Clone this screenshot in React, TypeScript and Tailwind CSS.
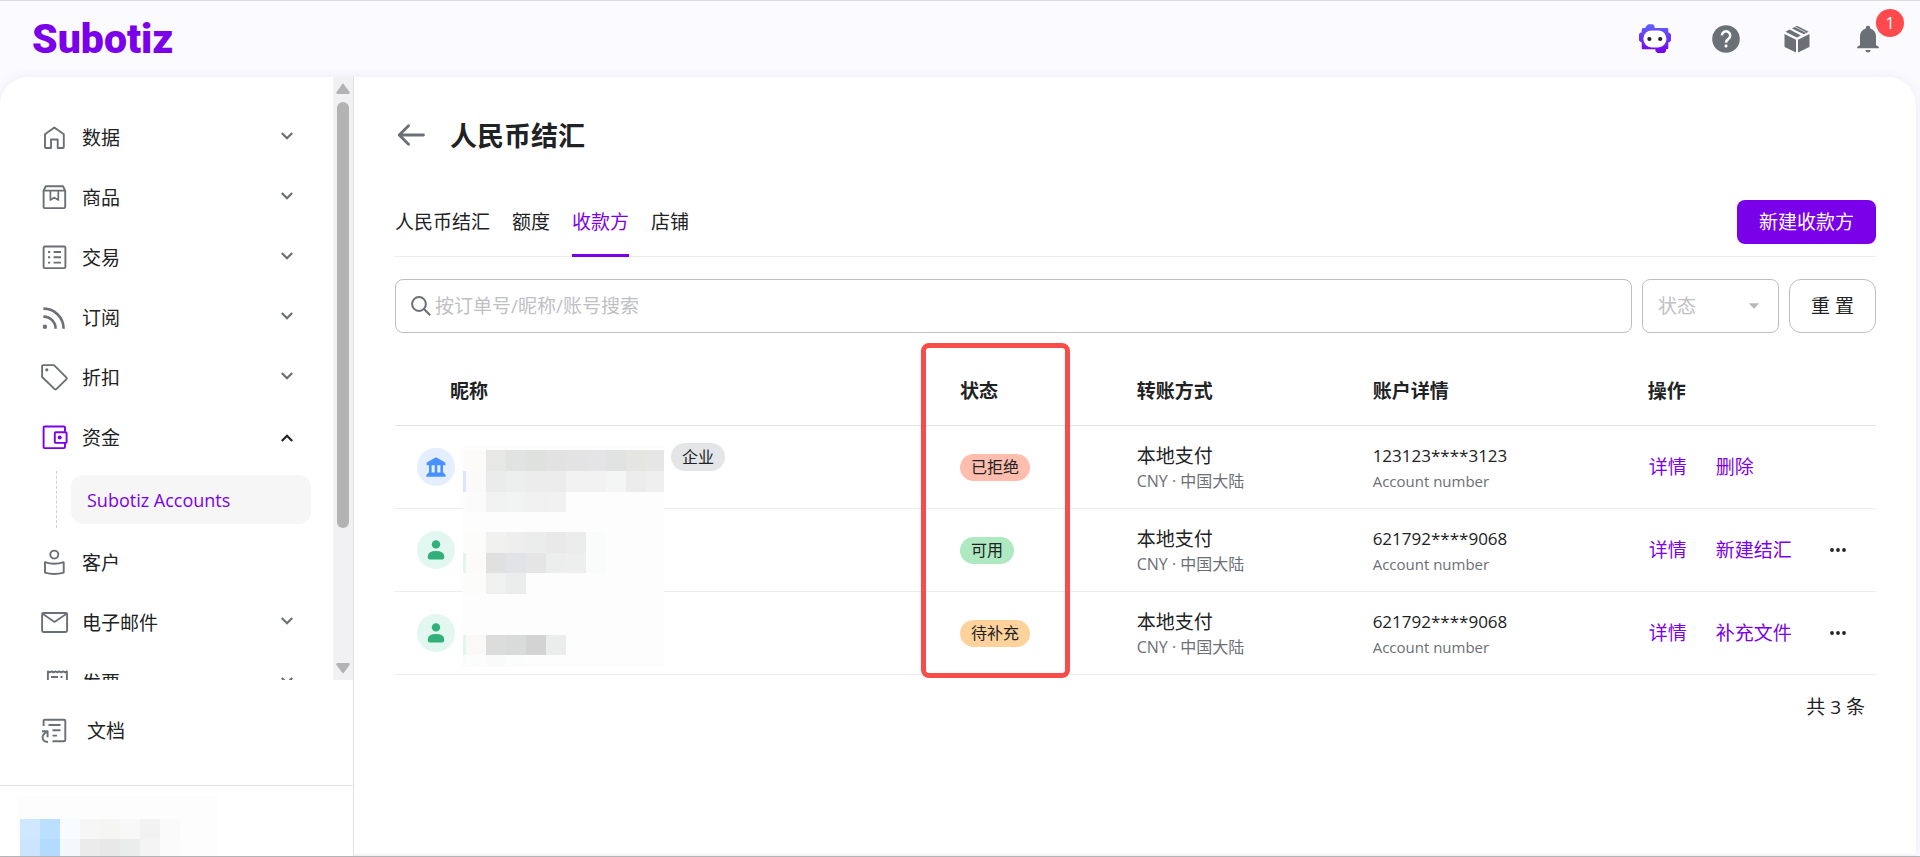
import React from "react";
import type { ReactNode } from "react";

type NavItem = {
  label: string;
  icon: ReactNode;
  chevron?: "down" | "up";
  children?: string[];
};

type Payee = {
  kind: "company" | "person";
  tag?: string;
  status: string;
  statusClass: string;
  method: string;
  region: string;
  account: string;
  action: string;
  more: boolean;
};

function NavIcon({ children, className = "text-[#6b6f76]" }: { children: ReactNode; className?: string }) {
  return (
    <svg
      viewBox="0 0 26 26"
      className={`size-[26px] shrink-0 overflow-visible ${className}`}
      fill="none"
      stroke="currentColor"
      strokeWidth="1.9"
      strokeLinejoin="round"
      aria-hidden="true"
    >
      {children}
    </svg>
  );
}

const navItems: NavItem[] = [
  {
    label: "数据",
    chevron: "down",
    icon: (
      <NavIcon>
        <path d="M4 9.2 13.3 2.4 22.8 9.2V22q0 1-1 1H16.7V14.5H10V23H5q-1 0-1-1Z" />
      </NavIcon>
    ),
  },
  {
    label: "商品",
    chevron: "down",
    icon: (
      <NavIcon>
        <path d="M2.6 5.6 4.8 1.3H22L24.2 5.6V22q0 1.1-1.1 1.1H3.7Q2.6 23.1 2.6 22ZM2.6 5.6H24.2" />
        <path d="M9.4 6V15L13.4 12.6 17.3 15V6" strokeWidth="1.7" />
      </NavIcon>
    ),
  },
  {
    label: "交易",
    chevron: "down",
    icon: (
      <NavIcon>
        <rect x="2.6" y="1.5" width="21.8" height="21.6" rx="1.2" />
        <path d="M12.6 7h7.4M12.6 12.3h7.4M12.6 17.6h7.4M7 7h2.2M7 12.3h2.2M7 17.6h2.2" />
      </NavIcon>
    ),
  },
  {
    label: "订阅",
    chevron: "down",
    icon: (
      <NavIcon>
        <circle cx="3.9" cy="21.8" r="2.2" fill="currentColor" stroke="none" />
        <path d="M2.4 3.6A20 20 0 0 1 22.6 23.8M2.4 11.6A12 12 0 0 1 14.6 23.8" strokeWidth="2.6" />
      </NavIcon>
    ),
  },
  {
    label: "折扣",
    chevron: "down",
    icon: (
      <NavIcon>
        <path d="M1.1 1.1Q1.1.1 2.1.1H13L25.5 12.6q.8.8 0 1.6L15.3 24.1q-.8.8-1.6 0L1.1 12Z" />
        <circle cx="5.8" cy="4.8" r="1" fill="currentColor" strokeWidth="1.2" />
      </NavIcon>
    ),
  },
  {
    label: "资金",
    chevron: "up",
    children: ["Subotiz Accounts"],
    icon: (
      <NavIcon className="text-[#7b00ea]">
        <path d="M24 6.8V2.6q0-1.1-1.1-1.1H3.7q-1.1 0-1.1 1.1V22q0 1.1 1.1 1.1h19.2q1.1 0 1.1-1.1V18" />
        <rect x="13.8" y="7.3" width="11.8" height="10.6" rx="1" />
        <circle cx="18.7" cy="12.5" r="2" fill="currentColor" stroke="none" />
      </NavIcon>
    ),
  },
  {
    label: "客户",
    icon: (
      <NavIcon>
        <circle cx="13.3" cy="4.6" r="4" />
        <path d="M4 12.2Q13.3 15.4 22.7 12.2V22.6Q13.3 25.4 4 22.6Z" />
      </NavIcon>
    ),
  },
  {
    label: "电子邮件",
    chevron: "down",
    icon: (
      <NavIcon>
        <rect x="1.1" y="3" width="25" height="19" rx="1.2" />
        <path d="M1.6 3.8 13.5 12 25.6 3.8" strokeWidth="1.7" />
      </NavIcon>
    ),
  },
  {
    label: "发票",
    chevron: "down",
    icon: (
      <NavIcon>
        <path d="M6.9 25V1.4l1.9 1 1.9-1 1.9 1 1.9-1 1.9 1 1.9-1 1.9 1 1.9-1 1.9 1 1.9-1V25Z" />
        <path d="M10 7h7M19.5 7h2M10 12h7" />
      </NavIcon>
    ),
  },
];

const payees: Payee[] = [
  {
    kind: "company",
    tag: "企业",
    status: "已拒绝",
    statusClass: "bg-[#ffbdae]",
    method: "本地支付",
    region: "CNY · 中国大陆",
    account: "123123****3123",
    action: "删除",
    more: false,
  },
  {
    kind: "person",
    status: "可用",
    statusClass: "bg-[#aee9c1]",
    method: "本地支付",
    region: "CNY · 中国大陆",
    account: "621792****9068",
    action: "新建结汇",
    more: true,
  },
  {
    kind: "person",
    status: "待补充",
    statusClass: "bg-[#ffd29c]",
    method: "本地支付",
    region: "CNY · 中国大陆",
    account: "621792****9068",
    action: "补充文件",
    more: true,
  },
];

// first entry is the strip height, the rest are the block colours from left to right
const nameMask: [number, ...string[]][] = [
  [5],
  [21, "#fbfbfb", "#fcfbfa", "#e7e7e5", "#e1e3e2", "#dfe1df", "#e1e2e1", "#e3e3e3", "#e4e4e7", "#e1e3e3", "#e5e5e2", "#e5e6e5"],
  [21, "#dbe5fd", "#fafafa", "#ebebeb", "#edefee", "#ececec", "#ececec", "#f2f2f2", "#f2f2f2", "#f4f6f5", "#ececec", "#efefef"],
  [20, "#fcfcfc", "#fbfbfb", "#f2f2f2", "#f2f4f3", "#f0f0f0", "#f1f1f1"],
  [20],
  [21, "#fafdfc", "#fcfcfa", "#f1f1ef", "#eeeeee", "#ebeded", "#e9e9e9", "#ececec", "#fafcfb"],
  [20, "#e2f6ee", "#fcfbf9", "#e0e0e0", "#e2e3e7", "#e5e5e5", "#eceeed", "#eeeeee", "#fafcfb"],
  [21, "#fafdfc", "#fcfcfa", "#f0f0f0", "#ebeded"],
  [41],
  [20, "#e2f6ee", "#fbf9f7", "#dcdcdc", "#d9dada", "#d3d3d3", "#ebedec"],
  [12, "#f5fcf9", "#fcfcfc", "#fafafa", "#fbfcfc"],
];

const accountMask: [number, ...string[]][] = [
  [23],
  [20, "#fdfdfd", "#d0e8ff", "#bbdfff", "#f7fcff", "#f6f6f6", "#f5f5f4", "#f8f8f8", "#f2f2f2", "#fafafa"],
  [18, "#fdfdfd", "#cbe4ff", "#b3daff", "#f3f8fd", "#ebebeb", "#e8e8e8", "#ebecec", "#f4f4f4", "#fafbfa"],
];

function Mask({ rows }: { rows: [number, ...string[]][] }) {
  return (
    <div className="w-[201px] bg-[#fdfdfd]" aria-hidden="true">
      {rows.map(([height, ...colors], i) => (
        <div key={i} className="flex overflow-hidden" style={{ height }}>
          {colors.map((color, j) => (
            <div key={j} className={j === 0 ? "w-[3px] shrink-0" : "w-5 shrink-0"} style={{ backgroundColor: color }} />
          ))}
        </div>
      ))}
    </div>
  );
}

function Chevron({ dir }: { dir: "down" | "up" }) {
  return (
    <svg viewBox="0 0 12 8" className={`w-3 h-2 ${dir === "up" ? "text-[#222]" : "text-[#6b6f76] mb-1"}`} fill="none" stroke="currentColor" strokeWidth="2.2" aria-hidden="true">
      {dir === "up" ? <path d="M.8 7 6 1.8 11.2 7" /> : <path d="M.8 1 6 6.2 11.2 1" />}
    </svg>
  );
}

function Header() {
  return (
    <header className="h-[77px] shrink-0 flex items-center justify-between border-t border-[#dedee0] pl-8 pr-9">
      <a href="#" className="font-[Roboto,sans-serif] text-[41px] leading-10 font-black text-[#7b00ea]">
        Subotiz
      </a>
      <div className="flex items-center gap-[39px]">
        <button type="button" aria-label="AI" className="size-8">
          <svg viewBox="0 0 32 30" className="w-8 h-[30px]">
            <defs>
              <linearGradient id="bot" x1="0" y1="0" x2="0" y2="1">
                <stop offset="0" stopColor="#5f63ff" />
                <stop offset="1" stopColor="#7800ec" />
              </linearGradient>
            </defs>
            <path
              fill="url(#bot)"
              d="M6.3 4Q6.3 2.8 8.2 1.2L9.4.2H14l1.6 2v1.9H28q1.3 0 1.3 1.3v3.2H30l2 1.6v6.4l-1.6 1.6h-1.1V24q0 1.3-1.3 1.3h-1v2L25.3 29H18.4l-2-2v-1.7H4q-1.3 0-1.3-1.3v-5.8H2L0 16.5V10l1.6-1.5h1.1V6q0-1.9 1.5-1.9Z"
            />
            <rect x="4.4" y="6.4" width="23" height="17" rx="8.2" fill="#fff" />
            <circle cx="10.4" cy="15" r="2.1" fill="#222" />
            <circle cx="21.2" cy="15" r="2.1" fill="#222" />
          </svg>
        </button>
        <button type="button" aria-label="帮助" className="size-8 grid place-items-center">
          <svg viewBox="0 0 28 28" className="size-7">
            <circle cx="14" cy="14" r="13.8" fill="#6b6f76" />
            <path d="M9.8 10.4a4.2 4.2 0 1 1 6.4 3.7q-2.2 1.4-2.2 3.6" fill="none" stroke="#fff" strokeWidth="2.5" />
            <rect x="12.6" y="19.6" width="2.8" height="2.8" rx=".8" fill="#fff" />
          </svg>
        </button>
        <button type="button" aria-label="应用" className="size-8 grid place-items-center">
          <svg viewBox="0 0 26 28" className="w-[26px] h-7" fill="#6b6f76">
            <path d="M.5 9 12 14.8V27.6L1.2 22.3Q.5 22 .5 21.2ZM25.5 9 14 14.8V27.6l10.8-5.3q.7-.3.7-1.1Z" />
            <path d="M1.4 6.8 5.6 4.6 16.900 10.400 13 12.500ZM8 3.400 12 1.200Q13 .7 14 1.200L24.600 6.800 20 9.200Z" />
            <path d="m11 1.800 10.800 5.600" stroke="#fbfaff" strokeWidth=".7" />
          </svg>
        </button>
        <button type="button" aria-label="通知" className="relative size-8 grid place-items-center">
          <svg viewBox="0 0 22 28" className="w-[22px] h-7" fill="#6b6f76">
            <path d="M11 .8q2.2 0 2.2 2v.6q5.8 1.6 5.8 8.4v8.4l2.4 1.2q.6.4.6 1.8H0q0-1.4.6-1.8L3 20.200V11.800Q3 5 8.800 3.400V2.800q0-2 2.200-2ZM8.200 25H13.800Q13.400 27.400 11 27.400T8.200 25Z" />
          </svg>
          <span className="absolute -top-3.5 left-6 size-7 rounded-full bg-[#ff4a4d] text-white text-base grid place-items-center">1</span>
        </button>
      </div>
    </header>
  );
}

function Sidebar() {
  return (
    <aside className="w-[354px] shrink-0 flex flex-col border-r border-[#e0e1e3]">
      <div className="flex-1 min-h-0 flex">
        <nav className="flex-1 min-w-0 overflow-hidden pt-[31px]">
          <ul>
            {navItems.map((item) => (
              <li key={item.label}>
                <button type="button" className="w-full h-[60px] flex items-center pl-[41px] pr-10 text-left">
                  {item.icon}
                  <span className="flex-1 pl-[15px]">{item.label}</span>
                  {item.chevron && <Chevron dir={item.chevron} />}
                </button>
                {item.children && (
                  <ul className="ml-14 mr-[22px] mt-[3px] mb-[5px] border-l border-dashed border-[#cfd0d3] pl-3.5 h-[57px] grid items-center">
                    {item.children.map((child) => (
                      <li key={child}>
                        <a href="#" className="h-[49px] flex items-center rounded-xl bg-[#f6f6f7] pl-4 text-lg text-[#7b00ea]">
                          {child}
                        </a>
                      </li>
                    ))}
                  </ul>
                )}
              </li>
            ))}
          </ul>
        </nav>
        <div className="w-5 shrink-0 flex flex-col items-center bg-[#f1f1f3] pt-1.5 pb-1.5" aria-hidden="true">
          <svg viewBox="0 0 14 11" className="w-3.5 h-[11px]" fill="#b3b3b3">
            <path d="M6 1.400Q7-.2 8 1.400L13.500 9q.8 2-1 2h-11q-1.800 0-1-2Z" />
          </svg>
          <div className="flex-1 w-3 pt-2">
            <div className="h-[76%] rounded-full bg-[#b3b3b3]" />
          </div>
          <svg viewBox="0 0 14 11" className="w-3.5 h-[11px]" fill="#b3b3b3">
            <path d="M6 9.600Q7 11.200 8 9.600L13.500 2q.8-2-1-2h-11Q-.3 0 .5 2Z" />
          </svg>
        </div>
      </div>
      <a href="#" className="h-[105px] shrink-0 flex items-start pl-[41px] pt-[38px]">
        <NavIcon>
          <path d="M2.600 8V3q0-1.300 1.300-1.300H23q1.300 0 1.300 1.300V22q0 1.300-1.300 1.300H11.500" />
          <path d="M7.500 7h12M11.500 12.300h8M11.500 17.600h4.500" />
          <path d="M1 13.200h5.600v6M6.400 13.600Q1.200 16 1.600 20.200 2.200 24 7 24" />
        </NavIcon>
        <span className="pl-5 leading-[26px]">文档</span>
      </a>
      <div className="h-[71px] shrink-0 border-t border-[#e0e1e3] pl-[17px] pt-2.5 overflow-hidden">
        <Mask rows={accountMask} />
      </div>
    </aside>
  );
}

function Avatar({ kind }: { kind: Payee["kind"] }) {
  if (kind === "company") {
    return (
      <span className="size-[38px] shrink-0 rounded-full bg-[#e4eefe] grid place-items-center">
        <svg viewBox="0 0 20 20" className="size-5" fill="#4791ff" aria-hidden="true">
          <path d="M10 .3 19.300 5.400V8.200H.7V5.400ZM3 8h2.600v8H3ZM8.700 8h2.600v8H8.700ZM14.400 8H17v8h-2.600ZM2.600 15.500H17.400L19.600 18v1.700H.4V18Z" />
        </svg>
      </span>
    );
  }
  return (
    <span className="size-[38px] shrink-0 rounded-full bg-[#e2f7ef] grid place-items-center">
      <svg viewBox="0 0 18 20" className="w-[18px] h-5" fill="#31b07b" aria-hidden="true">
        <circle cx="9" cy="4.400" r="4.200" />
        <path d="M.8 16.500Q.8 11 9 11t8.200 5.500V17.500Q17.200 19.500 15 19.500H3Q.8 19.500.8 17.500Z" />
      </svg>
    </span>
  );
}

function PayeeTable() {
  return (
    <div className="relative mt-[22px]">
      <table className="w-full table-fixed text-left">
        <thead>
          <tr className="h-[70px] border-b border-[#e1e2e4]">
            <th className="w-[37%] pt-0.5 pl-[55px] font-bold">昵称</th>
            <th className="w-[12%] pt-0.5 pl-[17px] font-bold">状态</th>
            <th className="w-[16%] pt-0.5 pl-4 font-bold">转账方式</th>
            <th className="w-[18.5%] pt-0.5 pl-[15px] font-bold">账户详情</th>
            <th className="pt-0.5 pl-4 font-bold">操作</th>
          </tr>
        </thead>
        <tbody>
          {payees.map((p, i) => (
            <tr key={i} className="h-[83px] border-b border-[#ececee]">
              <td className="pl-[22px]">
                <div className="flex items-center">
                  <Avatar kind={p.kind} />
                  {p.tag && (
                    <span className="ml-auto mr-[218px] -mt-5 h-7 leading-7 rounded-full bg-[#e3e5e7] px-[11px] text-base">{p.tag}</span>
                  )}
                </div>
              </td>
              <td className="pl-[17px]">
                <span className={`inline-block align-middle h-[27px] leading-[27px] rounded-full px-[11px] text-base ${p.statusClass}`}>{p.status}</span>
              </td>
              <td className="pl-4">
                <div className="leading-7">{p.method}</div>
                <div className="text-base leading-[22px] text-[#6b6f76]">{p.region}</div>
              </td>
              <td className="pl-[15px]">
                <div className="text-[17px] leading-7">{p.account}</div>
                <div className="text-[15px] leading-[22px] text-[#6b6f76]">Account number</div>
              </td>
              <td className="pl-[17px]">
                <div className="flex items-center text-[#7b00ea]">
                  <a href="#">详情</a>
                  <a href="#" className="ml-[29px]">{p.action}</a>
                  {p.more && (
                    <button type="button" aria-label="更多" className="ml-auto mr-[30px]">
                      <svg viewBox="0 0 16 4" className="w-4 h-1" fill="#222">
                        <circle cx="2" cy="2" r="1.900" />
                        <circle cx="8" cy="2" r="1.900" />
                        <circle cx="14" cy="2" r="1.900" />
                      </svg>
                    </button>
                  )}
                </div>
              </td>
            </tr>
          ))}
        </tbody>
      </table>
      <div className="absolute left-[68px] top-[90px]">
        <Mask rows={nameMask} />
      </div>
      <div className="absolute left-[35.5%] -top-3 -bottom-[3px] w-[149px] rounded-lg border-[5px] border-[#f84c48] pointer-events-none" />
    </div>
  );
}

function App() {
  const tabs = ["人民币结汇", "额度", "收款方", "店铺"];

  return (
    <div className="h-screen flex flex-col bg-[#fbfaff] border-b border-[#b9b9b9] font-['Open_Sans','Noto_Sans_CJK_SC',sans-serif] text-[19px] leading-7 text-[#202223]">
      <Header />
      <div className="flex-1 min-h-0 mr-1 flex bg-white rounded-t-[28px] overflow-hidden shadow-[0_0_12px_rgba(80,60,140,0.08)]">
        <Sidebar />
        <main className="flex-1 min-w-0 pl-[41px] pr-10 pt-[35px] border-b-2 border-[#f4f4f8]">
          <div className="flex items-center h-[46px]">
            <button type="button" aria-label="返回" className="w-[55px]">
              <svg viewBox="0 0 28 22" className="ml-0.5 w-7 h-[22px]" fill="none" stroke="#6b6f76" strokeWidth="2.800" strokeLinecap="round" strokeLinejoin="round">
                <path d="M26.500 11H2.500M11.500 1.800 2.200 11l9.300 9.200" />
              </svg>
            </button>
            <h1 className="pt-0.5 text-[27px] leading-10 font-bold">人民币结汇</h1>
          </div>
          <div className="mt-[31px] h-[68px] flex items-stretch border-b border-[#ececee]">
            <div className="flex gap-[22px]" role="tablist">
              {tabs.map((tab) => (
                <button
                  key={tab}
                  type="button"
                  role="tab"
                  aria-selected={tab === "收款方"}
                  className={`-mb-px border-b-3 ${tab === "收款方" ? "border-[#7b00ea] text-[#7b00ea]" : "border-transparent"}`}
                >
                  {tab}
                </button>
              ))}
            </div>
            <button type="button" className="ml-auto mt-[11px] h-11 rounded-lg bg-[#7b00ea] px-[22px] text-white">
              新建收款方
            </button>
          </div>
          <div className="mt-[22px] flex gap-[10px] h-[54px]">
            <label className="flex-1 flex items-center rounded-lg border border-[#bdbec4] pl-[15px]">
              <svg viewBox="0 0 20 20" className="size-5 shrink-0" fill="none" stroke="#6b6f76" strokeWidth="2" aria-hidden="true">
                <circle cx="8" cy="8" r="6.900" />
                <path d="m13 13 6.200 6.200" />
              </svg>
              <input
                type="text"
                aria-label="搜索"
                placeholder="按订单号/昵称/账号搜索"
                className="flex-1 min-w-0 ml-1 mr-3 outline-none placeholder:text-[#bfc0c4]"
              />
            </label>
            <div className="relative">
              <select aria-label="状态" defaultValue="" className="appearance-none w-[137px] h-full rounded-lg border border-[#bdbec4] pl-[15px] text-[#bfc0c4] bg-white">
                <option value="">状态</option>
                {payees.map((p) => (
                  <option key={p.status}>{p.status}</option>
                ))}
              </select>
              <svg viewBox="0 0 10 6" className="absolute right-5 top-6 w-2.5 h-1.5 pointer-events-none" fill="#b7b8bc">
                <path d="M.5.200h9q.6 0 .2.600L5.600 5.200Q5 5.800 4.400 5.200L.3.800Q-.1.200.5.200Z" />
              </svg>
            </div>
            <button type="button" className="rounded-xl border border-[#bdbec4] px-[21px]">
              重 置
            </button>
          </div>
          <PayeeTable />
          <p className="mt-[18px] pr-[11px] text-right">共 3 条</p>
        </main>
      </div>
    </div>
  );
}

export default App;
